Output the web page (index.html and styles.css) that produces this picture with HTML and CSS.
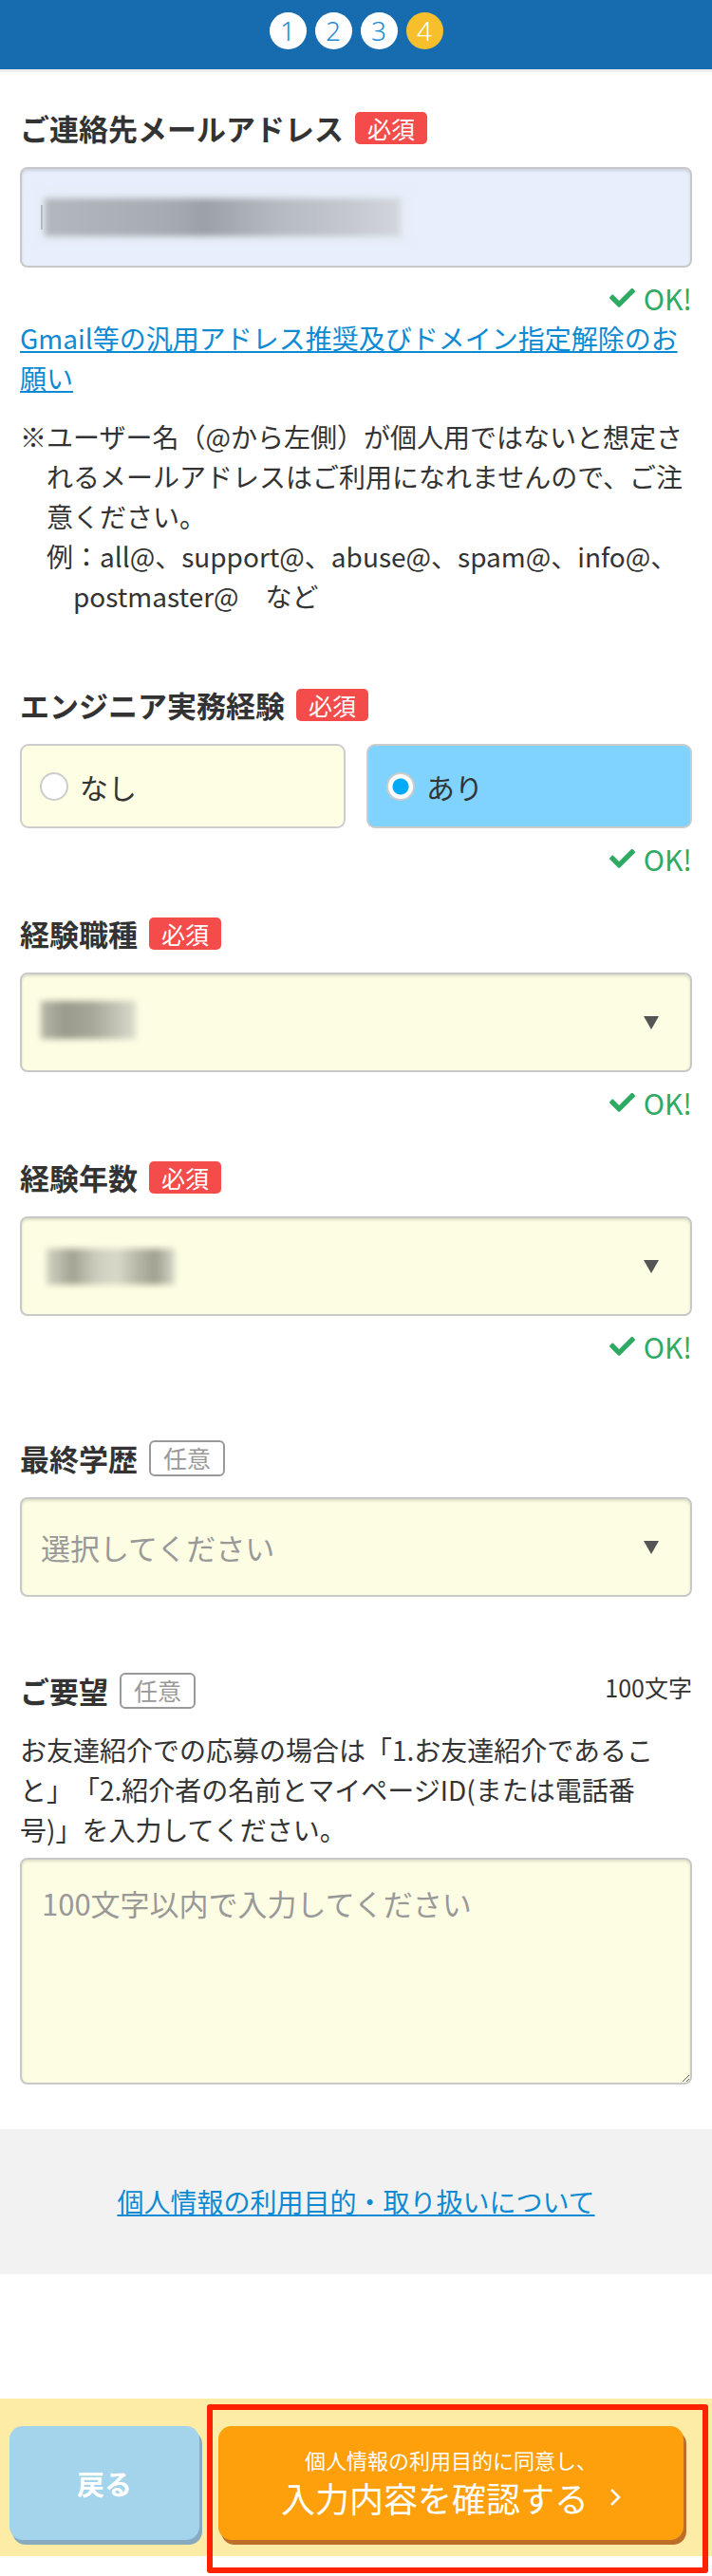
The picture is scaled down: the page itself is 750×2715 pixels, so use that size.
FILE: index.html
```html
<!DOCTYPE html>
<html lang="ja">
<head>
<meta charset="utf-8">
<title>エントリーフォーム</title>
<link rel="stylesheet" href="styles.css">
</head>
<body>
<header class="header">
  <span class="step">1</span>
  <span class="step">2</span>
  <span class="step">3</span>
  <span class="step current">4</span>
</header>

<main class="main">
  <div class="field-label first">
    <span class="label-text">ご連絡先メールアドレス</span>
    <span class="badge">必須</span>
  </div>
  <div class="email-input">
    <span class="caret"></span>
    <span class="blur blur-email"></span>
  </div>
  <div class="ok">
    <svg class="check" viewBox="0 72 512 372" aria-hidden="true"><path d="M173.9 439.4l-166.4-166.4c-10-10-10-26.2 0-36.2l36.2-36.2c10-10 26.2-10 36.2 0L192 312.7 432.1 72.6c10-10 26.2-10 36.2 0l36.2 36.2c10 10 10 26.2 0 36.2l-294.4 294.4c-10 10-26.2 10-36.2 0z"/></svg>
    <span>OK!</span>
  </div>
  <a class="notice-link" href="#">Gmail等の汎用アドレス推奨及びドメイン指定解除のお願い</a>
  <div class="note">
    <p class="note-main">※ユーザー名（@から左側）が個人用ではないと想定されるメールアドレスはご利用になれませんので、ご注意ください。</p>
    <p class="note-example">例：all@、support@、abuse@、spam@、info@、postmaster@　など</p>
  </div>

  <div class="field-label gap-l">
    <span class="label-text">エンジニア実務経験</span>
    <span class="badge">必須</span>
  </div>
  <div class="radio-group">
    <div class="radio-option"><span class="radio-dot"></span><span>なし</span></div>
    <div class="radio-option selected"><span class="radio-dot checked"></span><span>あり</span></div>
  </div>
  <div class="ok">
    <svg class="check" viewBox="0 72 512 372" aria-hidden="true"><path d="M173.9 439.4l-166.4-166.4c-10-10-10-26.2 0-36.2l36.2-36.2c10-10 26.2-10 36.2 0L192 312.7 432.1 72.6c10-10 26.2-10 36.2 0l36.2 36.2c10 10 10 26.2 0 36.2l-294.4 294.4c-10 10-26.2 10-36.2 0z"/></svg>
    <span>OK!</span>
  </div>

  <div class="field-label gap-m">
    <span class="label-text">経験職種</span>
    <span class="badge">必須</span>
  </div>
  <div class="select">
    <span class="blur blur-job"></span>
    <span class="arrow"></span>
  </div>
  <div class="ok">
    <svg class="check" viewBox="0 72 512 372" aria-hidden="true"><path d="M173.9 439.4l-166.4-166.4c-10-10-10-26.2 0-36.2l36.2-36.2c10-10 26.2-10 36.2 0L192 312.7 432.1 72.6c10-10 26.2-10 36.2 0l36.2 36.2c10 10 10 26.2 0 36.2l-294.4 294.4c-10 10-26.2 10-36.2 0z"/></svg>
    <span>OK!</span>
  </div>

  <div class="field-label gap-m">
    <span class="label-text">経験年数</span>
    <span class="badge">必須</span>
  </div>
  <div class="select">
    <span class="blur blur-years"></span>
    <span class="arrow"></span>
  </div>
  <div class="ok">
    <svg class="check" viewBox="0 72 512 372" aria-hidden="true"><path d="M173.9 439.4l-166.4-166.4c-10-10-10-26.2 0-36.2l36.2-36.2c10-10 26.2-10 36.2 0L192 312.7 432.1 72.6c10-10 26.2-10 36.2 0l36.2 36.2c10 10 10 26.2 0 36.2l-294.4 294.4c-10 10-26.2 10-36.2 0z"/></svg>
    <span>OK!</span>
  </div>

  <div class="field-label gap-xl">
    <span class="label-text">最終学歴</span>
    <span class="badge optional">任意</span>
  </div>
  <div class="select compact">
    <span class="placeholder">選択してください</span>
    <span class="arrow"></span>
  </div>

  <div class="field-label gap-xl2">
    <span class="label-text">ご要望</span>
    <span class="badge optional">任意</span>
    <span class="counter">100文字</span>
  </div>
  <p class="desc">お友達紹介での応募の場合は「1.お友達紹介であること」「2.紹介者の名前とマイページID(または電話番号)」を入力してください。</p>
  <textarea class="request" placeholder="100文字以内で入力してください"></textarea>
</main>

<section class="privacy">
  <a class="privacy-link" href="#">個人情報の利用目的・取り扱いについて</a>
</section>

<div class="spacer"></div>

<footer class="footer">
  <a class="btn btn-back" href="#">戻る</a>
  <a class="btn btn-confirm" href="#">
    <span class="confirm-sub">個人情報の利用目的に同意し、</span>
    <span class="confirm-main">入力内容を確認する<svg class="chevron" viewBox="0 0 12 20" aria-hidden="true"><polyline points="2,2 10,10 2,18"/></svg></span>
  </a>
  <div class="highlight"></div>
</footer>
</body>
</html>
```

FILE: styles.css
```css
html, body {
  margin: 0;
  padding: 0;
}

body {
  width: 750px;
  background: #fff;
  color: #333;
  font-family: "Noto Sans CJK JP", "Noto Sans", sans-serif;
  text-spacing-trim: space-all;
}

p {
  margin: 0;
}

/* Header with steps */
.header {
  height: 76px;
  box-sizing: border-box;
  background: #176cb0;
  border-bottom: 3px solid #eeeeee;
  display: flex;
  justify-content: center;
  align-items: flex-start;
  gap: 9px;
  padding-top: 13px;
}

.step {
  width: 39px;
  height: 39px;
  border-radius: 50%;
  background: #fff;
  color: #1a8bd5;
  font-size: 28px;
  line-height: 39px;
  text-align: center;
  font-weight: 300;
  font-family: "Noto Sans", "Noto Sans CJK JP", sans-serif;
}

.step.current {
  background: #f6bf2b;
  color: #fff;
}

/* Main form */
.main {
  padding: 0 21px;
}

.field-label {
  display: flex;
  align-items: center;
  min-height: 34px;
}

.field-label.first { margin-top: 42px; }
.field-label.gap-l { margin-top: 77px; }
.field-label.gap-m { margin-top: 44px; }
.field-label.gap-xl { margin-top: 81px; }
.field-label.gap-xl2 { margin-top: 80px; }

.label-text {
  font-size: 31px;
  font-weight: 700;
  line-height: 34px;
  color: #333;
}

.badge {
  margin-left: 12px;
  height: 34px;
  line-height: 34px;
  padding: 0 13px;
  font-size: 25px;
  border-radius: 5px;
  background: #f44b4b;
  color: #fff;
}

.badge.optional {
  height: 38px;
  box-sizing: border-box;
  border: 2px solid #999;
  background: #fff;
  color: #999;
  line-height: 33px;
  padding: 0 13px;
  border-radius: 6px;
}

.counter {
  margin-left: auto;
  font-size: 25px;
  color: #333;
  align-self: flex-start;
  line-height: 30px;
}

.email-input {
  margin-top: 24px;
  height: 106px;
  box-sizing: border-box;
  border: 2px solid #c8c8c8;
  border-radius: 8px;
  background: #e7effd;
  box-shadow: inset 0 2px 3px rgba(0, 0, 0, 0.12);
  display: flex;
  align-items: center;
  padding-left: 20px;
}

.caret {
  width: 2px;
  height: 26px;
  background: #222;
  margin-right: 2px;
}

.blur {
  display: block;
  filter: blur(3px);
}

.blur-email {
  width: 375px;
  height: 40px;
  background: linear-gradient(90deg, #b3b8bf 0%, #a6abb3 35%, #9ca1a9 45%, #b5bac1 65%, #c4c8ce 85%, #d3d7dd 100%);
  box-shadow: 0 0 6px 8px rgba(230, 236, 246, 0.9);
}

.ok {
  margin-top: 14px;
  height: 36px;
  display: flex;
  justify-content: flex-end;
  align-items: center;
  gap: 9px;
  color: #2eaa62;
  font-size: 30px;
  line-height: 36px;
}

.check {
  width: 27px;
  height: 20px;
  fill: #2eaa62;
}

.notice-link {
  display: block;
  margin-top: 3px;
  font-size: 28px;
  line-height: 42px;
  color: #0c8ad3;
  text-decoration: underline;
}

.note {
  margin-top: 20px;
  font-size: 28px;
  line-height: 42px;
  color: #333;
}

.note-main {
  padding-left: 28px;
  text-indent: -28px;
}

.note-example {
  padding-left: 56px;
  text-indent: -28px;
}

/* Radio */
.radio-group {
  margin-top: 24px;
  display: grid;
  grid-template-columns: 1fr 1fr;
  gap: 22px;
}

.radio-option {
  height: 89px;
  box-sizing: border-box;
  border: 2px solid #cccccc;
  border-radius: 9px;
  background: #fefee4;
  display: flex;
  align-items: center;
  gap: 12px;
  padding-left: 19px;
  font-size: 30px;
  color: #333;
}

.radio-option.selected {
  background: #7fd3fe;
}

.radio-dot {
  width: 30px;
  height: 30px;
  box-sizing: border-box;
  border-radius: 50%;
  border: 2px solid #cccccc;
  background: #fff;
}

.radio-dot.checked {
  background: radial-gradient(circle, #05aaf7 0, #05aaf7 8px, #fff 9px);
}

/* Select */
.select {
  margin-top: 24px;
  height: 105px;
  box-sizing: border-box;
  border: 2px solid #c8c8c8;
  border-radius: 8px;
  background: #fdfde3;
  box-shadow: inset 0 2px 3px rgba(0, 0, 0, 0.12);
  display: flex;
  align-items: center;
  justify-content: space-between;
  padding: 0 33px 0 20px;
  font-size: 31px;
}

.select.compact {
  margin-top: 22px;
}

.placeholder {
  color: #999;
}

.arrow {
  width: 0;
  height: 0;
  border-left: 8px solid transparent;
  border-right: 8px solid transparent;
  border-top: 14px solid #555;
}

.blur-job {
  width: 100px;
  height: 40px;
  margin-top: -6px;
  background: linear-gradient(90deg, #b8b8aa 0%, #9a9a8c 25%, #a8a89a 55%, #c4c4b6 80%, #dcdccd 100%);
}

.blur-years {
  width: 135px;
  height: 38px;
  margin-left: 6px;
  background: linear-gradient(90deg, #d3d3c3 0%, #a3a393 20%, #cfcfbf 40%, #d9d9c9 55%, #b9b9a9 70%, #a0a090 85%, #d8d8c8 100%);
}

/* Request */
.desc {
  margin-top: 22px;
  font-size: 28px;
  line-height: 42px;
  color: #333;
}

.request {
  display: block;
  margin-top: 9px;
  width: 100%;
  height: 239px;
  box-sizing: border-box;
  border: 2px solid #c8c8c8;
  border-radius: 8px;
  background: #fdfde3;
  box-shadow: inset 0 2px 3px rgba(0, 0, 0, 0.12);
  padding: 24px 21px;
  font-family: "Noto Sans CJK JP", "Noto Sans", sans-serif;
  font-size: 31px;
  line-height: 44px;
  color: #333;
  resize: vertical;
}

.request::placeholder {
  color: #999;
}

/* Privacy */
.privacy {
  margin-top: 47px;
  height: 153px;
  box-sizing: border-box;
  background: #f2f2f2;
  padding-top: 55px;
  text-align: center;
}

.privacy-link {
  font-size: 28px;
  line-height: 42px;
  color: #0c8ad3;
  text-decoration: underline;
}

.spacer {
  height: 131px;
}

/* Footer */
.footer {
  position: relative;
  height: 166px;
  box-sizing: border-box;
  background: #fdeca6;
  display: flex;
  align-items: flex-start;
  gap: 20px;
  padding: 29px 30px 0 10px;
  margin-bottom: 20px;
}

.btn {
  height: 120px;
  border-radius: 14px;
  color: #fff;
  text-decoration: none;
  display: flex;
  flex-direction: column;
  align-items: center;
  justify-content: center;
}

.btn-back {
  width: 200px;
  background: #a3d4ec;
  box-shadow: 3px 5px 0 #88abbf;
  font-size: 29px;
  font-weight: 700;
}

.btn-confirm {
  flex: 1;
  background: #fea00c;
  box-shadow: 3px 5px 0 #bd6e28;
}

.confirm-sub {
  font-size: 22px;
  line-height: 30px;
}

.confirm-main {
  font-size: 36px;
  line-height: 50px;
  display: flex;
  align-items: center;
}

.chevron {
  width: 12px;
  height: 20px;
  margin-left: 22px;
  fill: none;
  stroke: #fff;
  stroke-width: 2.5;
}

.highlight {
  position: absolute;
  left: 218px;
  top: 6px;
  width: 528px;
  height: 178px;
  box-sizing: border-box;
  border: 6px solid #ff2200;
  border-radius: 3px;
  pointer-events: none;
}
```
